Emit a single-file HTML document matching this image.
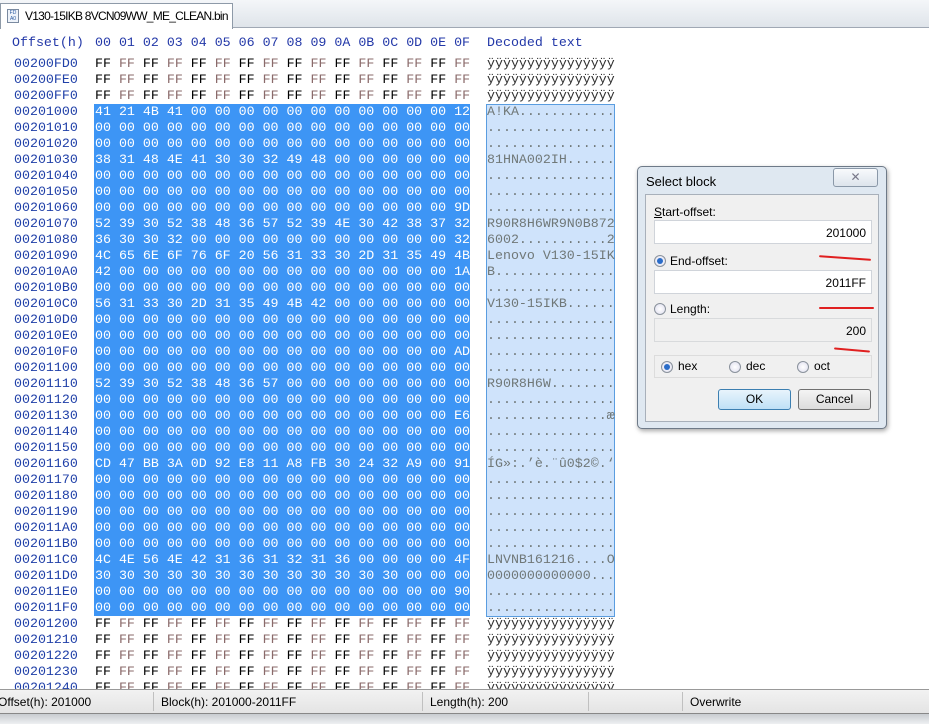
<!DOCTYPE html>
<html><head><meta charset="utf-8"><style>
*{margin:0;padding:0;box-sizing:border-box}
body{width:929px;height:724px;overflow:hidden;background:#fff;position:relative;font-family:"Liberation Sans",sans-serif}
.top{position:absolute;left:0;top:0;width:929px;height:28px;background:linear-gradient(#f4f6f9,#dfe4ea);border-bottom:1px solid #a0a8b4}
.tab{position:absolute;left:0;top:3px;width:233px;height:26px;background:#fff;border:1px solid #8e9aa8;border-bottom:none;font-size:12px;color:#000;padding:5px 0 0 24px;letter-spacing:-0.75px;white-space:nowrap;overflow:hidden}
.tab i{position:absolute;left:6px;top:5px;width:12px;height:14px;border:1px solid #7a8aa0;background:#eef3fa;font-style:normal;font-size:5px;line-height:6px;color:#2a5aa0;text-align:center;letter-spacing:0}
.m{font-family:"Liberation Mono",monospace;font-size:13.3px;position:absolute;white-space:pre;line-height:16px}
.hd{top:35px;color:#2338a8}
.o{left:14px;color:#2040a8}
.h{left:95px;color:#000}
.h i{font-style:normal;color:#8a6a6a}
.s{color:#fff}.s i{color:#fff}
.d{left:487px;color:#303030}
.ds{color:#707878}
.sel{position:absolute;left:94px;top:104px;width:376px;height:512px;background:#3d95f5}
.dsel{position:absolute;left:486px;top:104px;width:129px;height:513px;background:#cfe3fb;border:1px solid #5a9de0}
.sb{position:absolute;left:0;top:689px;width:929px;height:24px;background:linear-gradient(#f2f2f2,#e4e4e4);border-top:1px solid #999;font-size:12px;color:#000}
.sb span{position:absolute;top:5px}
.sb b{position:absolute;top:2px;width:1px;height:19px;background:#c0c0c0}
.bot{position:absolute;left:0;top:713px;width:929px;height:11px;background:linear-gradient(#c8ccd0,#eef0f2);border-top:1px solid #888}
.dlg{position:absolute;left:637px;top:166px;width:250px;height:263px;background:#dfe8f1;border:1px solid #6e7a88;border-radius:5px;box-shadow:1px 2px 5px rgba(0,0,0,.35)}
.dlg .t{position:absolute;left:8px;top:7px;font-size:13px}
.cl{position:absolute;left:195px;top:1px;width:45px;height:19px;border:1px solid #8a98a8;border-radius:3px;background:linear-gradient(#f8fafc,#dde4ec);font-size:12px;color:#778;text-align:center;line-height:17px}
.pn{position:absolute;left:7px;top:27px;width:234px;height:228px;background:#f0f0f0;border:1px solid #a8b0ba}
.lb{position:absolute;font-size:12px;color:#000}
.in{position:absolute;left:8px;width:218px;height:24px;background:#fff;border:1px solid #d0d4da;font-size:12px;text-align:right;padding:5px 5px 0 0}
.rd{position:absolute;width:12px;height:12px;border-radius:50%;border:1px solid #8a929c;background:radial-gradient(#fff,#dde)}
.rd.on::after{content:"";position:absolute;left:2px;top:2px;width:6px;height:6px;border-radius:50%;background:#2a6cc8}
.red{position:absolute;height:2px;background:#e02020;border-radius:1px}
.btn{position:absolute;height:21px;border:1px solid #707070;border-radius:3px;font-size:12px;text-align:center;line-height:19px;background:linear-gradient(#f4f4f4,#dcdcdc)}
</style></head><body>
<div class="top"><div class="tab"><i>FD<br>A0</i>V130-15IKB 8VCN09WW_ME_CLEAN.bin</div></div>

<div class="m hd" style="left:12px">Offset(h)</div>
<div class="m hd" style="left:95px">00 01 02 03 04 05 06 07 08 09 0A 0B 0C 0D 0E 0F</div>
<div class="m hd" style="left:487px">Decoded text</div>

<div class="sel"></div>
<div class="dsel"></div>

<div class="m o" style="top:56px">00200FD0
00200FE0
00200FF0
00201000
00201010
00201020
00201030
00201040
00201050
00201060
00201070
00201080
00201090
002010A0
002010B0
002010C0
002010D0
002010E0
002010F0
00201100
00201110
00201120
00201130
00201140
00201150
00201160
00201170
00201180
00201190
002011A0
002011B0
002011C0
002011D0
002011E0
002011F0
00201200
00201210
00201220
00201230
00201240</div>

<div class="m h" style="top:56px">FF <i>FF</i> FF <i>FF</i> FF <i>FF</i> FF <i>FF</i> FF <i>FF</i> FF <i>FF</i> FF <i>FF</i> FF <i>FF</i>
FF <i>FF</i> FF <i>FF</i> FF <i>FF</i> FF <i>FF</i> FF <i>FF</i> FF <i>FF</i> FF <i>FF</i> FF <i>FF</i>
FF <i>FF</i> FF <i>FF</i> FF <i>FF</i> FF <i>FF</i> FF <i>FF</i> FF <i>FF</i> FF <i>FF</i> FF <i>FF</i></div>

<div class="m h s" style="top:104px">41 21 4B 41 00 00 00 00 00 00 00 00 00 00 00 12
00 00 00 00 00 00 00 00 00 00 00 00 00 00 00 00
00 00 00 00 00 00 00 00 00 00 00 00 00 00 00 00
38 31 48 4E 41 30 30 32 49 48 00 00 00 00 00 00
00 00 00 00 00 00 00 00 00 00 00 00 00 00 00 00
00 00 00 00 00 00 00 00 00 00 00 00 00 00 00 00
00 00 00 00 00 00 00 00 00 00 00 00 00 00 00 9D
52 39 30 52 38 48 36 57 52 39 4E 30 42 38 37 32
36 30 30 32 00 00 00 00 00 00 00 00 00 00 00 32
4C 65 6E 6F 76 6F 20 56 31 33 30 2D 31 35 49 4B
42 00 00 00 00 00 00 00 00 00 00 00 00 00 00 1A
00 00 00 00 00 00 00 00 00 00 00 00 00 00 00 00
56 31 33 30 2D 31 35 49 4B 42 00 00 00 00 00 00
00 00 00 00 00 00 00 00 00 00 00 00 00 00 00 00
00 00 00 00 00 00 00 00 00 00 00 00 00 00 00 00
00 00 00 00 00 00 00 00 00 00 00 00 00 00 00 AD
00 00 00 00 00 00 00 00 00 00 00 00 00 00 00 00
52 39 30 52 38 48 36 57 00 00 00 00 00 00 00 00
00 00 00 00 00 00 00 00 00 00 00 00 00 00 00 00
00 00 00 00 00 00 00 00 00 00 00 00 00 00 00 E6
00 00 00 00 00 00 00 00 00 00 00 00 00 00 00 00
00 00 00 00 00 00 00 00 00 00 00 00 00 00 00 00
CD 47 BB 3A 0D 92 E8 11 A8 FB 30 24 32 A9 00 91
00 00 00 00 00 00 00 00 00 00 00 00 00 00 00 00
00 00 00 00 00 00 00 00 00 00 00 00 00 00 00 00
00 00 00 00 00 00 00 00 00 00 00 00 00 00 00 00
00 00 00 00 00 00 00 00 00 00 00 00 00 00 00 00
00 00 00 00 00 00 00 00 00 00 00 00 00 00 00 00
4C 4E 56 4E 42 31 36 31 32 31 36 00 00 00 00 4F
30 30 30 30 30 30 30 30 30 30 30 30 30 00 00 00
00 00 00 00 00 00 00 00 00 00 00 00 00 00 00 90
00 00 00 00 00 00 00 00 00 00 00 00 00 00 00 00</div>

<div class="m h" style="top:616px">FF <i>FF</i> FF <i>FF</i> FF <i>FF</i> FF <i>FF</i> FF <i>FF</i> FF <i>FF</i> FF <i>FF</i> FF <i>FF</i>
FF <i>FF</i> FF <i>FF</i> FF <i>FF</i> FF <i>FF</i> FF <i>FF</i> FF <i>FF</i> FF <i>FF</i> FF <i>FF</i>
FF <i>FF</i> FF <i>FF</i> FF <i>FF</i> FF <i>FF</i> FF <i>FF</i> FF <i>FF</i> FF <i>FF</i> FF <i>FF</i>
FF <i>FF</i> FF <i>FF</i> FF <i>FF</i> FF <i>FF</i> FF <i>FF</i> FF <i>FF</i> FF <i>FF</i> FF <i>FF</i>
FF <i>FF</i> FF <i>FF</i> FF <i>FF</i> FF <i>FF</i> FF <i>FF</i> FF <i>FF</i> FF <i>FF</i> FF <i>FF</i></div>

<div class="m d" style="top:56px">ÿÿÿÿÿÿÿÿÿÿÿÿÿÿÿÿ
ÿÿÿÿÿÿÿÿÿÿÿÿÿÿÿÿ
ÿÿÿÿÿÿÿÿÿÿÿÿÿÿÿÿ</div>
<div class="m d ds" style="top:104px">A!KA............
................
................
81HNA002IH......
................
................
................
R90R8H6WR9N0B872
6002...........2
Lenovo V130-15IK
B...............
................
V130-15IKB......
................
................
................
................
R90R8H6W........
................
...............æ
................
................
ÍG»:.’è.¨û0$2©.‘
................
................
................
................
................
LNVNB161216....O
0000000000000...
................
................</div>
<div class="m d" style="top:616px">ÿÿÿÿÿÿÿÿÿÿÿÿÿÿÿÿ
ÿÿÿÿÿÿÿÿÿÿÿÿÿÿÿÿ
ÿÿÿÿÿÿÿÿÿÿÿÿÿÿÿÿ
ÿÿÿÿÿÿÿÿÿÿÿÿÿÿÿÿ
ÿÿÿÿÿÿÿÿÿÿÿÿÿÿÿÿ</div>

<div class="sb">
<span style="left:-2px">Offset(h): 201000</span><b style="left:153px"></b>
<span style="left:161px">Block(h): 201000-2011FF</span><b style="left:422px"></b>
<span style="left:430px">Length(h): 200</span><b style="left:588px"></b><b style="left:682px"></b>
<span style="left:690px">Overwrite</span>
</div>
<div class="bot"></div>

<div class="dlg">
<div class="t">Select block</div>
<div class="cl">✕</div>
<div class="pn">
<div class="lb" style="left:8px;top:10px"><u>S</u>tart-offset:</div>
<div class="in" style="top:25px">201000</div>
<div class="red" style="left:173px;top:62px;width:52px;transform:rotate(4deg)"></div>
<div class="rd on" style="left:8px;top:60px"></div>
<div class="lb" style="left:24px;top:59px">End-offset:</div>
<div class="in" style="top:75px">2011FF</div>
<div class="red" style="left:173px;top:112px;width:55px"></div>
<div class="rd" style="left:8px;top:108px"></div>
<div class="lb" style="left:24px;top:107px">Length:</div>
<div class="in" style="top:123px;background:#f0f0f0;border-color:#d8dadc">200</div>
<div class="red" style="left:188px;top:154px;width:36px;transform:rotate(5deg)"></div>
<div style="position:absolute;left:8px;top:160px;width:218px;height:23px;border:1px solid #dcdcdc"></div>
<div class="rd on" style="left:15px;top:166px"></div><div class="lb" style="left:32px;top:164px">hex</div>
<div class="rd" style="left:83px;top:166px"></div><div class="lb" style="left:100px;top:164px">dec</div>
<div class="rd" style="left:151px;top:166px"></div><div class="lb" style="left:168px;top:164px">oct</div>
<div class="btn" style="left:72px;top:194px;width:73px;border-color:#3c7fb1;background:linear-gradient(#e8f4fc,#bfe0f6)">OK</div>
<div class="btn" style="left:152px;top:194px;width:73px">Cancel</div>
</div>
</div>
</body></html>
